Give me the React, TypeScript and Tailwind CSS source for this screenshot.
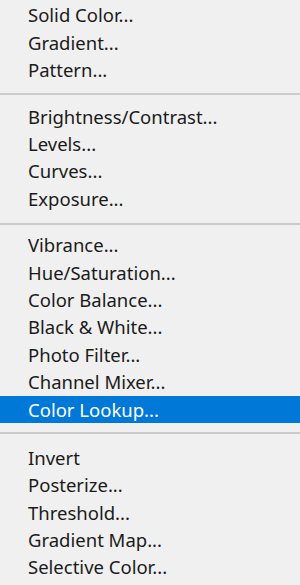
import React from "react";

const sections: string[][] = [
  ["Solid Color...", "Gradient...", "Pattern..."],
  ["Brightness/Contrast...", "Levels...", "Curves...", "Exposure..."],
  [
    "Vibrance...",
    "Hue/Saturation...",
    "Color Balance...",
    "Black & White...",
    "Photo Filter...",
    "Channel Mixer...",
    "Color Lookup...",
  ],
  ["Invert", "Posterize...", "Threshold...", "Gradient Map...", "Selective Color..."],
];

const sepClasses = ["", "h-[19px] pt-[9px]", "h-[19px] pt-[10px]", "h-[21px] pt-[9px]"];

export default function App() {
  return (
    <div
      className="w-[300px] h-[585px] overflow-hidden bg-[#f0f0f0] pt-[2px] text-[18.5px] text-[#1b1b1b]"
      style={{ fontFamily: '"Segoe UI", "Noto Sans", sans-serif' }}
    >
      {sections.map((items, si) => (
        <div key={si}>
          {si > 0 && (
            <div className={sepClasses[si]}>
              <div className="h-[2px] bg-[#cbcbcb]" />
            </div>
          )}
          {items.map((label) => {
            const active = label === "Color Lookup...";
            return (
              <div
                key={label}
                className={
                  "h-[27.4px] flex items-center pl-[28px] leading-none " +
                  (active ? "bg-[#0078d7] text-white" : "")
                }
              >
                {label}
              </div>
            );
          })}
        </div>
      ))}
    </div>
  );
}
